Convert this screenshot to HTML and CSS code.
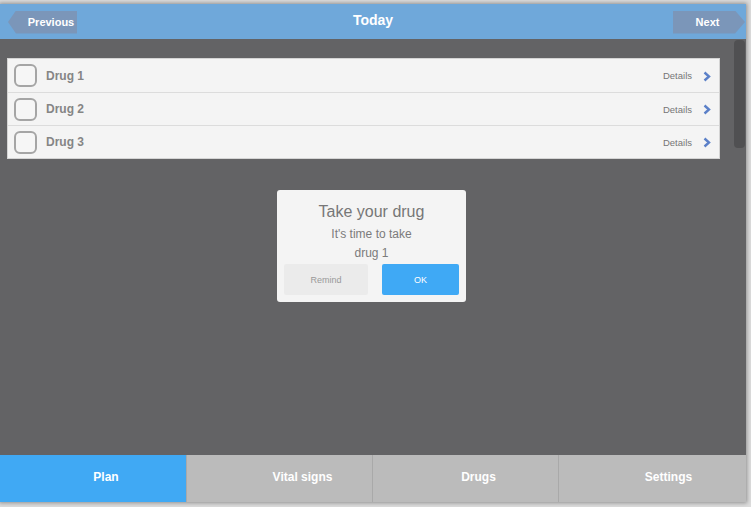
FILE: index.html
```html
<!DOCTYPE html>
<html>
<head>
<meta charset="utf-8">
<link rel="stylesheet" href="styles.css">
</head>
<body>
<div class="app">
  <header class="topbar">
    <button class="nav-btn prev">Previous</button>
    <h1 class="title">Today</h1>
    <button class="nav-btn next">Next</button>
  </header>
  <main class="content">
    <ul class="list">
      <li class="row"><span class="check"></span><span class="name">Drug 1</span><span class="details">Details</span><svg class="chev" width="8" height="11" viewBox="0 0 8 11"><path d="M1.5 1.5 L6 5.5 L1.5 9.5" fill="none" stroke="#5b80c8" stroke-width="2.4"/></svg></li>
      <li class="row"><span class="check"></span><span class="name">Drug 2</span><span class="details">Details</span><svg class="chev" width="8" height="11" viewBox="0 0 8 11"><path d="M1.5 1.5 L6 5.5 L1.5 9.5" fill="none" stroke="#5b80c8" stroke-width="2.4"/></svg></li>
      <li class="row"><span class="check"></span><span class="name">Drug 3</span><span class="details">Details</span><svg class="chev" width="8" height="11" viewBox="0 0 8 11"><path d="M1.5 1.5 L6 5.5 L1.5 9.5" fill="none" stroke="#5b80c8" stroke-width="2.4"/></svg></li>
    </ul>
    <div class="scrollbar"></div>
    <div class="dialog">
      <div class="d-title">Take your drug</div>
      <div class="d-text">It's time to take</div>
      <div class="d-text d-text2">drug 1</div>
      <div class="d-actions">
        <button class="d-btn remind">Remind</button>
        <button class="d-btn ok">OK</button>
      </div>
    </div>
  </main>
  <nav class="tabs">
    <div class="tab active">Plan</div>
    <div class="tab tab-vital">Vital signs</div>
    <div class="tab tab-drugs">Drugs</div>
    <div class="tab tab-settings">Settings</div>
  </nav>
</div>
</body>
</html>
```
FILE: styles.css
```css
* { box-sizing: border-box; }
html, body { margin: 0; padding: 0; }
body {
  background: #dcdcdc;
  font-family: "Liberation Sans", Arial, sans-serif;
  width: 751px;
  height: 507px;
  overflow: hidden;
  padding-top: 4px;
}
.app {
  width: 746px;
  height: 498px;
  display: flex;
  flex-direction: column;
  box-shadow: 0 0 4px 1px rgba(0,0,0,0.35);
  background: #636365;
}
.topbar {
  height: 35px;
  background: #6fa8da;
  display: flex;
  align-items: center;
  justify-content: space-between;
  padding: 0 1px 0 8px;
  position: relative;
}
.title {
  margin: 0;
  position: absolute;
  left: 0; right: 0;
  top: 8px;
  text-align: center;
  font-size: 14px;
  font-weight: bold;
  color: #fff;
  pointer-events: none;
}
.nav-btn {
  border: 0;
  height: 23px;
  margin-top: 1px;
  background: #7b96b9;
  color: #fff;
  font: bold 11px "Liberation Sans", Arial, sans-serif;
  padding: 0;
}
.prev {
  width: 69px;
  padding-left: 17px;
  clip-path: polygon(8px 0, 100% 0, 100% 100%, 8px 100%, 0 50%);
}
.next {
  width: 72px;
  padding-right: 3px;
  clip-path: polygon(0 0, 62px 0, 100% 50%, 62px 100%, 0 100%);
}
.content {
  flex: 1;
  position: relative;
  padding: 19px 26px 0 7px;
}
.list {
  list-style: none;
  margin: 0;
  padding: 0;
  background: #f4f4f4;
  border: 1px solid #d4d4d4;
  width: 713px;
}
.row {
  height: 33px;
  display: flex;
  align-items: center;
  padding: 0 8px 0 6px;
  border-top: 1px solid #dcdcdc;
}
.row:first-child { border-top: 0; }
.check {
  width: 23px;
  height: 23px;
  border: 2px solid #a5a5a5;
  border-radius: 6px;
  background: #f6f6f6;
}
.name {
  margin-left: 9px;
  font-size: 12px;
  font-weight: bold;
  color: #858585;
  flex: 1;
}
.details {
  font-size: 9.5px;
  color: #767676;
  margin-right: 11px;
}
.chev { display: block; margin-top: 1px; }
.scrollbar {
  position: absolute;
  right: 1px;
  top: 1px;
  width: 11px;
  height: 108px;
  background: #505052;
  border-radius: 4px;
}
.dialog {
  position: absolute;
  left: 277px;
  top: 151px;
  width: 189px;
  height: 112px;
  background: #f4f4f4;
  border-radius: 3px;
  padding: 12px 7px 7px 7px;
  text-align: center;
  color: #7a7a7a;
}
.d-title {
  font-size: 16px;
  line-height: 20px;
  color: #777;
}
.d-text {
  font-size: 12px;
  line-height: 16px;
  margin-top: 4px;
  color: #7b7b7b;
}
.d-text2 { margin-top: 3px; }
.d-actions {
  display: flex;
  justify-content: space-between;
  margin-top: 3px;
}
.d-btn {
  border: 0;
  height: 31px;
  border-radius: 2px;
  font: 9px "Liberation Sans", Arial, sans-serif;
  padding: 0;
}
.remind { width: 84px; background: #ebebeb; color: #999; }
.ok { width: 77px; background: #3fa9f5; color: #fff; }
.tabs {
  height: 47px;
  display: flex;
  background: #bbbbbb;
}
.tab {
  flex: 0 0 auto;
  display: flex;
  align-items: center;
  justify-content: center;
  padding-bottom: 4px;
  font-size: 12px;
  font-weight: bold;
  color: #fff;
  background: #bbbbbb;
  border-left: 1px solid #a9a9a9;
}
.tab.active {
  background: #40a9f4;
  border-left: 0;
  width: 186px;
  padding-left: 26px;
}
.tab-vital { width: 186px; padding-left: 46px; }
.tab-drugs { width: 186px; padding-left: 26px; }
.tab-settings { width: 188px; padding-left: 32px; }
```
